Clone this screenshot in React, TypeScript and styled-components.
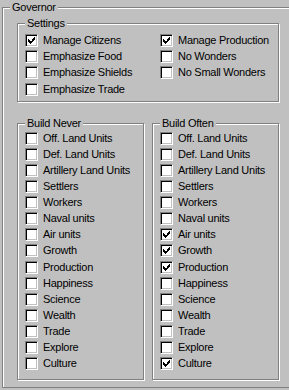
import React from 'react';
import styled, { createGlobalStyle } from 'styled-components';

const GlobalStyle = createGlobalStyle`
  html, body {
    margin: 0;
    padding: 0;
    background: #c0c0c0;
    overflow: hidden;
  }
  body {
    font-family: "Liberation Sans", Arial, sans-serif;
    font-size: 11px;
    color: #000;
  }
`;

interface IItem {
  label: string
  checked?: boolean
}

const settingsLeft: IItem[] = [
  { label: 'Manage Citizens', checked: true },
  { label: 'Emphasize Food' },
  { label: 'Emphasize Shields' },
  { label: 'Emphasize Trade' },
];

const settingsRight: IItem[] = [
  { label: 'Manage Production', checked: true },
  { label: 'No Wonders' },
  { label: 'No Small Wonders' },
];

const buildNames = [
  'Off. Land Units',
  'Def. Land Units',
  'Artillery Land Units',
  'Settlers',
  'Workers',
  'Naval units',
  'Air units',
  'Growth',
  'Production',
  'Happiness',
  'Science',
  'Wealth',
  'Trade',
  'Explore',
  'Culture',
];

const oftenChecked = ['Air units', 'Growth', 'Production', 'Culture'];

function CheckMark() {
  return (
    <svg width="7" height="7" viewBox="0 0 7 7" shapeRendering="crispEdges">
      <path
        fill="#000"
        d="M6 0h1v3H6z M5 1h1v3H5z M4 2h1v3H4z M0 2h1v3H0z M1 3h1v3H1z M2 4h1v3H2z M3 4h1v2H3z"
      />
    </svg>
  );
}

function CheckRow({ label, checked, rowHeight }: IItem & { rowHeight: number }) {
  return (
    <Row $h={rowHeight}>
      <Box>{checked && <CheckMark />}</Box>
      <Label>{label}</Label>
    </Row>
  );
}

function App() {
  return (
    <>
      <GlobalStyle />
      <Page>
        <Frame $w={287} $h={381} $pad="15px 0 0 14px" $open>
          <Legend>Governor</Legend>
          <Frame $w={262} $h={79} $pad="8px 0 0 7px">
            <Legend>Settings</Legend>
            <Columns>
              <Column>
                {settingsLeft.map((it) => (
                  <CheckRow key={it.label} {...it} rowHeight={16.33} />
                ))}
              </Column>
              <Column>
                {settingsRight.map((it) => (
                  <CheckRow key={it.label} {...it} rowHeight={16.33} />
                ))}
              </Column>
            </Columns>
          </Frame>
          <BuildGroups>
            <Frame $w={127} $h={257} $pad="6px 0 0 7px">
              <Legend>Build Never</Legend>
              <Column>
                {buildNames.map((n) => (
                  <CheckRow key={n} label={n} rowHeight={16.14} />
                ))}
              </Column>
            </Frame>
            <Frame $w={127} $h={257} $pad="6px 0 0 7px">
              <Legend>Build Often</Legend>
              <Column>
                {buildNames.map((n) => (
                  <CheckRow key={n} label={n} checked={oftenChecked.includes(n)} rowHeight={16.14} />
                ))}
              </Column>
            </Frame>
          </BuildGroups>
        </Frame>
      </Page>
    </>
  );
}

export default App;

const Page = styled.div`
  padding: 7px 0 0 2px;
`

// etched group box; $open drops the right edge (the outer frame runs off the window)
const Frame = styled.div<{ $w: number; $h: number; $pad: string; $open?: boolean }>`
  position: relative;
  box-sizing: border-box;
  width: ${(p) => p.$w}px;
  height: ${(p) => p.$h}px;
  padding: ${(p) => p.$pad};
  border: 1px solid #808080;
  border-right: ${(p) => (p.$open ? 'none' : '1px solid #808080')};
  box-shadow: ${(p) => (p.$open ? 'inset 1px 1px 0 #fff, 0 1px 0 #fff' : 'inset 1px 1px 0 #fff, 1px 1px 0 #fff')};
`

const Legend = styled.span`
  position: absolute;
  top: -7px;
  left: 7px;
  padding: 0 2px;
  line-height: 13px;
  background: #c0c0c0;
  letter-spacing: -0.26px;
  white-space: nowrap;
`

const Columns = styled.div`
  display: grid;
  grid-template-columns: 135px 1fr;
`

const Column = styled.div`
  display: flex;
  flex-direction: column;
`

const BuildGroups = styled.div`
  display: flex;
  gap: 8px;
  margin-top: 21px;
`

const Row = styled.div<{ $h: number }>`
  display: flex;
  align-items: center;
  height: ${(p) => p.$h}px;
  white-space: nowrap;
`

const Box = styled.div`
  box-sizing: border-box;
  width: 13px;
  height: 13px;
  flex: none;
  margin-right: 5px;
  display: flex;
  align-items: center;
  justify-content: center;
  background: #fff;
  border: 1px solid;
  border-color: #808080 #fff #fff #808080;
  box-shadow: inset 1px 1px 0 #000, inset -1px -1px 0 #c0c0c0;
`

const Label = styled.span`
  line-height: 13px;
  letter-spacing: -0.26px;
`
